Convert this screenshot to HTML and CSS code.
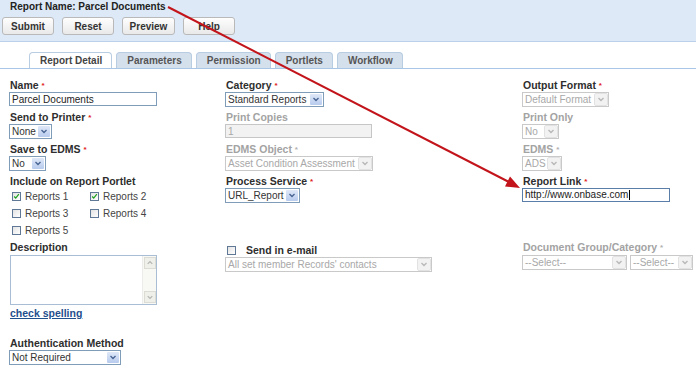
FILE: index.html
```html
<!DOCTYPE html>
<html>
<head>
    <title>Report Detail</title>
    <link rel="stylesheet" href="styles.css">
</head>
<body>
    <div class="header">
        <h1 class="title">Report Name: Parcel Documents</h1>
        <div class="toolbar">
            <button class="btn">Submit</button>
            <button class="btn">Reset</button>
            <button class="btn wide">Preview</button>
            <button class="btn">Help</button>
        </div>
    </div>

    <div class="tabs">
        <span class="tab active">Report Detail</span>
        <span class="tab">Parameters</span>
        <span class="tab">Permission</span>
        <span class="tab">Portlets</span>
        <span class="tab">Workflow</span>
    </div>

    <div class="form">
        <!-- row 1 -->
        <div class="field">
            <label class="lbl">Name <span class="req">*</span></label>
            <input class="text w148" type="text" value="Parcel Documents">
        </div>
        <div class="field">
            <label class="lbl">Category <span class="req">*</span></label>
            <div class="select w99"><span class="val">Standard Reports</span><span class="arrow"><svg viewBox="0 0 12 11"><path d="M3.5 4 L6 6.5 L8.5 4"/></svg></span></div>
        </div>
        <div class="field">
            <label class="lbl">Output Format <span class="req">*</span></label>
            <div class="select off w87"><span class="val">Default Format</span><span class="arrow"><svg viewBox="0 0 12 11"><path d="M3.5 4 L6 6.5 L8.5 4"/></svg></span></div>
        </div>

        <!-- row 2 -->
        <div class="field">
            <label class="lbl">Send to Printer <span class="req">*</span></label>
            <div class="select w43"><span class="val">None</span><span class="arrow"><svg viewBox="0 0 12 11"><path d="M3.5 4 L6 6.5 L8.5 4"/></svg></span></div>
        </div>
        <div class="field">
            <label class="lbl dim">Print Copies</label>
            <input class="text off w147" type="text" value="1" disabled>
        </div>
        <div class="field">
            <label class="lbl dim">Print Only</label>
            <div class="select off w37"><span class="val">No</span><span class="arrow"><svg viewBox="0 0 12 11"><path d="M3.5 4 L6 6.5 L8.5 4"/></svg></span></div>
        </div>

        <!-- row 3 -->
        <div class="field">
            <label class="lbl">Save to EDMS <span class="req">*</span></label>
            <div class="select w37"><span class="val">No</span><span class="arrow"><svg viewBox="0 0 12 11"><path d="M3.5 4 L6 6.5 L8.5 4"/></svg></span></div>
        </div>
        <div class="field">
            <label class="lbl dim">EDMS Object <span class="req dim">*</span></label>
            <div class="select off w148"><span class="val">Asset Condition Assessment</span><span class="arrow"><svg viewBox="0 0 12 11"><path d="M3.5 4 L6 6.5 L8.5 4"/></svg></span></div>
        </div>
        <div class="field">
            <label class="lbl dim">EDMS <span class="req dim">*</span></label>
            <div class="select off w40"><span class="val">ADS</span><span class="arrow"><svg viewBox="0 0 12 11"><path d="M3.5 4 L6 6.5 L8.5 4"/></svg></span></div>
        </div>

        <!-- row 4 -->
        <div class="field">
            <label class="lbl">Include on Report Portlet</label>
            <div class="checks">
                <span class="opt"><span class="cb on"><svg viewBox="0 0 9 9"><path d="M1.5 4.5 L3.5 6.5 L7.5 1.5"/></svg></span>Reports 1</span>
                <span class="opt"><span class="cb on"><svg viewBox="0 0 9 9"><path d="M1.5 4.5 L3.5 6.5 L7.5 1.5"/></svg></span>Reports 2</span>
                <span class="opt"><span class="cb"></span>Reports 3</span>
                <span class="opt"><span class="cb"></span>Reports 4</span>
                <span class="opt"><span class="cb"></span>Reports 5</span>
            </div>
        </div>
        <div class="field">
            <label class="lbl">Process Service <span class="req">*</span></label>
            <div class="select w75"><span class="val">URL_Report</span><span class="arrow"><svg viewBox="0 0 12 11"><path d="M3.5 4 L6 6.5 L8.5 4"/></svg></span></div>
        </div>
        <div class="field">
            <label class="lbl">Report Link <span class="req">*</span></label>
            <div class="text focus w148">http://www.onbase.com<span class="caret"></span></div>
        </div>

        <!-- row 5 -->
        <div class="stack">
            <label class="lbl">Description</label>
            <div class="textarea">
                <div class="scroll">
                    <span class="sbtn"><svg viewBox="0 0 11 11"><path d="M3 6.5 L5.5 4 L8 6.5"/></svg></span>
                    <span class="sbtn"><svg viewBox="0 0 11 11"><path d="M3 4.5 L5.5 7 L8 4.5"/></svg></span>
                </div>
            </div>
            <a class="spell" href="#">check spelling</a>
            <label class="lbl auth">Authentication Method</label>
            <div class="select w112"><span class="val">Not Required</span><span class="arrow"><svg viewBox="0 0 12 11"><path d="M3.5 4 L6 6.5 L8.5 4"/></svg></span></div>
        </div>
        <div class="field">
            <div class="email"><span class="cb"></span><span class="lbl">Send in e-mail</span></div>
            <div class="select off w207"><span class="val">All set member Records' contacts</span><span class="arrow"><svg viewBox="0 0 12 11"><path d="M3.5 4 L6 6.5 L8.5 4"/></svg></span></div>
        </div>
        <div class="field">
            <label class="lbl dim">Document Group/Category <span class="req dim">*</span></label>
            <div class="pair">
                <div class="select off w105"><span class="val">--Select--</span><span class="arrow"><svg viewBox="0 0 12 11"><path d="M3.5 4 L6 6.5 L8.5 4"/></svg></span></div>
                <div class="select off w63"><span class="val">--Select--</span><span class="arrow"><svg viewBox="0 0 12 11"><path d="M3.5 4 L6 6.5 L8.5 4"/></svg></span></div>
            </div>
        </div>
    </div>

    <svg class="pointer" width="696" height="367" viewBox="0 0 696 367">
        <line x1="168" y1="7" x2="508" y2="181.5"/>
        <polygon points="520,188 505,186.5 510,176.5"/>
    </svg>
</body>
</html>
```

FILE: styles.css
```css
body {
    margin: 0;
    font-family: "Liberation Sans", Arial, sans-serif;
    font-size: 10px;
    color: #333;
    position: relative;
    width: 696px;
    height: 367px;
    overflow: hidden;
    background: #fff;
}

/* header */
.header {
    background: #dde9f6;
    border-bottom: 1px solid #b9d1ea;
    padding: 0 2px 6px;
}

.title {
    margin: 0 0 0 8px;
    font-size: 10px;
    line-height: 13px;
    font-weight: bold;
    color: #222;
}

.toolbar {
    display: flex;
    gap: 8px;
    margin-top: 4px;
}

.btn {
    height: 18px;
    width: 52px;
    padding: 0;
    font-family: inherit;
    font-size: 10px;
    font-weight: bold;
    color: #333;
    border: 1px solid #b9b9b9;
    border-radius: 3px;
    background: linear-gradient(#fefefe, #e9e9e9);
}

.btn.wide {
    width: 53px;
}

/* tabs */
.tabs {
    display: flex;
    gap: 4px;
    margin-top: 10px;
    padding-left: 29px;
    border-bottom: 1px solid #a9c6e6;
}

.tab {
    height: 15px;
    line-height: 15px;
    padding: 0 9px 0 10px;
    border: 1px solid #b8cce2;
    border-bottom: none;
    border-radius: 4px 4px 0 0;
    background: #d5e0ed;
    font-weight: bold;
    color: #555;
}

.tab.active {
    background: #fff;
    color: #444;
}

/* form */
.form {
    display: grid;
    grid-template-columns: 216px 297px 1fr;
    grid-template-rows: 32px 32px 32px 66px auto;
    padding: 10px 0 0 9px;
}

.field,
.stack {
    display: flex;
    flex-direction: column;
    align-items: flex-start;
}

.lbl {
    display: block;
    height: 13px;
    line-height: 13px;
    padding-left: 1px;
    font-size: 10.5px;
    font-weight: bold;
    color: #2e2e2e;
}

.lbl.dim {
    color: #a3a3a3;
}

.req {
    color: #e02020;
    font-size: 8px;
    vertical-align: 1px;
}

.req.dim {
    color: #b0b0b0;
}

.text {
    box-sizing: border-box;
    height: 14px;
    margin: 0;
    padding: 0 2px;
    border: 1px solid #7f9db9;
    font-family: inherit;
    font-size: 10px;
    line-height: 12px;
    color: #222;
    background: #fff;
    outline: none;
}

.text.off {
    border-color: #c6c6c6;
    background: #f2f2f2;
    color: #a8a8a8;
}

.text.focus {
    display: flex;
    align-items: center;
    border-color: #5b7ea8;
}

.caret {
    display: inline-block;
    width: 1px;
    height: 10px;
    margin-left: 1px;
    background: #000;
}

.select {
    box-sizing: border-box;
    display: flex;
    align-items: center;
    height: 15px;
    border: 1px solid #7f9db9;
    background: #fff;
}

.select .val {
    flex: 1;
    overflow: hidden;
    white-space: nowrap;
    padding-left: 2px;
    font-size: 10px;
    line-height: 13px;
    color: #333;
}

.select .arrow {
    flex: none;
    width: 12px;
    height: 11px;
    margin: 0 1px;
    background: linear-gradient(#dfe8f8, #b8cbed);
    border-radius: 1px;
}

.select .arrow svg,
.sbtn svg {
    display: block;
    width: 100%;
    height: 100%;
    fill: none;
    stroke: #4a6594;
    stroke-width: 1.4;
}

.select.off {
    border-color: #c9c9c9;
}

.select.off .val {
    color: #a8a8a8;
}

.select.off .arrow {
    background: #f2f2f2;
    outline: 1px solid #e2e2e2;
}

.select.off .arrow svg {
    stroke: #b8b8b8;
}

.w37 { width: 37px; }
.w40 { width: 40px; }
.w43 { width: 43px; }
.w63 { width: 63px; }
.w75 { width: 75px; }
.w87 { width: 87px; }
.w99 { width: 99px; }
.w105 { width: 105px; }
.w112 { width: 112px; }
.w147 { width: 147px; }
.w148 { width: 148px; }
.w207 { width: 207px; }

/* checkboxes */
.checks {
    display: grid;
    grid-template-columns: 78px auto;
    grid-auto-rows: 17px;
    padding-left: 3px;
}

.opt {
    display: flex;
    align-items: center;
    font-size: 10px;
    color: #444;
}

.cb {
    box-sizing: border-box;
    display: inline-block;
    width: 9px;
    height: 9px;
    margin-right: 4px;
    border: 1px solid #5f7896;
    background: linear-gradient(135deg, #e3e3e3, #fff);
}

.cb svg {
    display: block;
    width: 100%;
    height: 100%;
    fill: none;
    stroke: #21a121;
    stroke-width: 1.6;
}

.email {
    display: flex;
    align-items: center;
    height: 14px;
    margin-top: 2px;
    padding-left: 2px;
}

.email .cb {
    margin-right: 9px;
}

.pair {
    display: flex;
    gap: 3px;
    margin-top: 1px;
}

/* description */
.textarea {
    box-sizing: border-box;
    display: flex;
    justify-content: flex-end;
    width: 147px;
    height: 50px;
    margin: 1px 0 0 1px;
    border: 1px solid #a9bdd5;
    background: #fff;
}

.scroll {
    display: flex;
    flex-direction: column;
    justify-content: space-between;
    width: 13px;
    border-left: 1px solid #ececec;
    background: #f8f8f4;
}

.sbtn {
    box-sizing: border-box;
    width: 12px;
    height: 12px;
    margin: 1px 0 1px 1px;
    border: 1px solid #dcdcd4;
    background: #f0f0ea;
}

.sbtn svg {
    stroke: #b4b4b4;
}

.spell {
    margin: 2px 0 0 1px;
    height: 13px;
    line-height: 13px;
    font-size: 10.5px;
    font-weight: bold;
    color: #1f4f8d;
}

.lbl.auth {
    margin-top: 17px;
}

/* red annotation arrow */
.pointer {
    position: absolute;
    top: 0;
    left: 0;
    pointer-events: none;
}

.pointer line {
    stroke: #c2141a;
    stroke-width: 2;
}

.pointer polygon {
    fill: #c2141a;
}
```
